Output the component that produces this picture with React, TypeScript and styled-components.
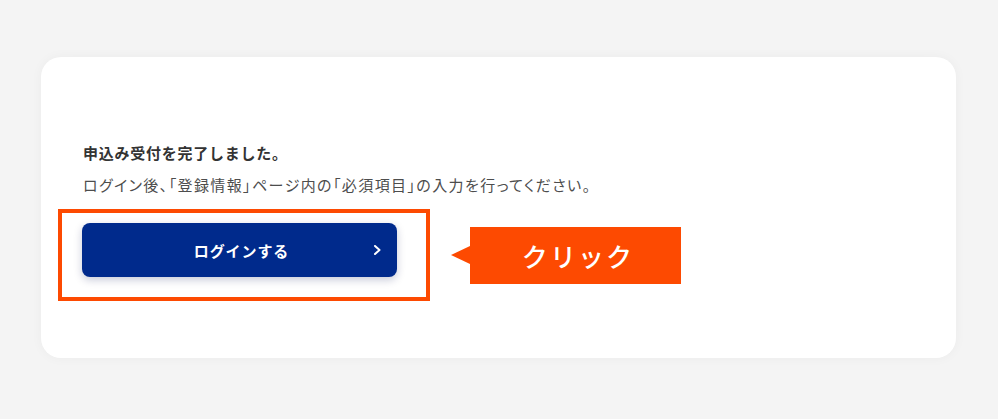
import styled, { createGlobalStyle } from 'styled-components';

const GlobalStyle = createGlobalStyle`
  html, body {
    margin: 0;
    padding: 0;
    background: #f4f4f4;
  }
  body {
    font-family: "Noto Sans CJK JP", "Noto Sans", sans-serif;
  }
`;

const Page = styled.div`
  padding: 57px 42px 61px 41px;
`;

const Card = styled.section`
  width: 915px;
  box-sizing: border-box;
  padding: 85px 42px 57px;
  background: #fff;
  border-radius: 20px;
  box-shadow: 0 0 12px rgba(0, 0, 0, 0.04);
`;

const Heading = styled.p`
  margin: 0;
  font-size: 15px;
  line-height: 22px;
  font-weight: 700;
  color: #333;
  letter-spacing: 0.05em;
`;

const Lead = styled.p`
  margin: 10px 0 0;
  font-size: 15px;
  line-height: 22px;
  color: #4d4d4d;
  letter-spacing: 1.4px;
  font-feature-settings: "palt";
`;

const Row = styled.div`
  display: flex;
  align-items: center;
  margin: 13px 0 0 -25px;
`;

const Highlight = styled.div`
  box-sizing: border-box;
  width: 372px;
  height: 92px;
  border: 4px solid #fd4a01;
  padding: 10px 29px 20px 20px;
`;

const LoginButton = styled.button`
  position: relative;
  display: flex;
  align-items: center;
  justify-content: center;
  box-sizing: border-box;
  width: 315px;
  height: 54px;
  padding: 0 0 0 4px;
  border: none;
  border-radius: 8px;
  background: #002a8c;
  color: #fff;
  font-family: inherit;
  font-size: 15px;
  font-weight: 700;
  letter-spacing: 0.06em;
  box-shadow: 0 3px 8px rgba(0, 20, 80, 0.22);
  cursor: pointer;

  svg {
    position: absolute;
    right: 15px;
    top: 50%;
    transform: translateY(-50%);
  }
`;

const Callout = styled.div`
  display: flex;
  align-items: center;
  margin-left: 21px;
`;

const Pointer = styled.span`
  width: 0;
  height: 0;
  border-top: 9px solid transparent;
  border-bottom: 9px solid transparent;
  border-right: 19px solid #fd4a01;
`;

const Tag = styled.div`
  width: 211px;
  height: 57px;
  display: flex;
  align-items: center;
  justify-content: center;
  background: #fd4a01;
  color: #fff;
  font-size: 26px;
  font-weight: 500;
  letter-spacing: 0.08em;
  padding-left: 5px;
  box-sizing: border-box;
`;

export default function App() {
  return (
    <>
      <GlobalStyle />
      <Page>
        <Card>
          <Heading>申込み受付を完了しました。</Heading>
          <Lead>ログイン後、「登録情報」ページ内の「必須項目」の入力を行ってください。</Lead>
          <Row>
            <Highlight>
              <LoginButton type="button">
                ログインする
                <svg width="9" height="10" viewBox="0 0 9 10" fill="none">
                  <path d="M2 1l4.5 4L2 9" stroke="#fff" strokeWidth="2" strokeLinecap="round" strokeLinejoin="round" />
                </svg>
              </LoginButton>
            </Highlight>
            <Callout>
              <Pointer />
              <Tag>クリック</Tag>
            </Callout>
          </Row>
        </Card>
      </Page>
    </>
  );
}
